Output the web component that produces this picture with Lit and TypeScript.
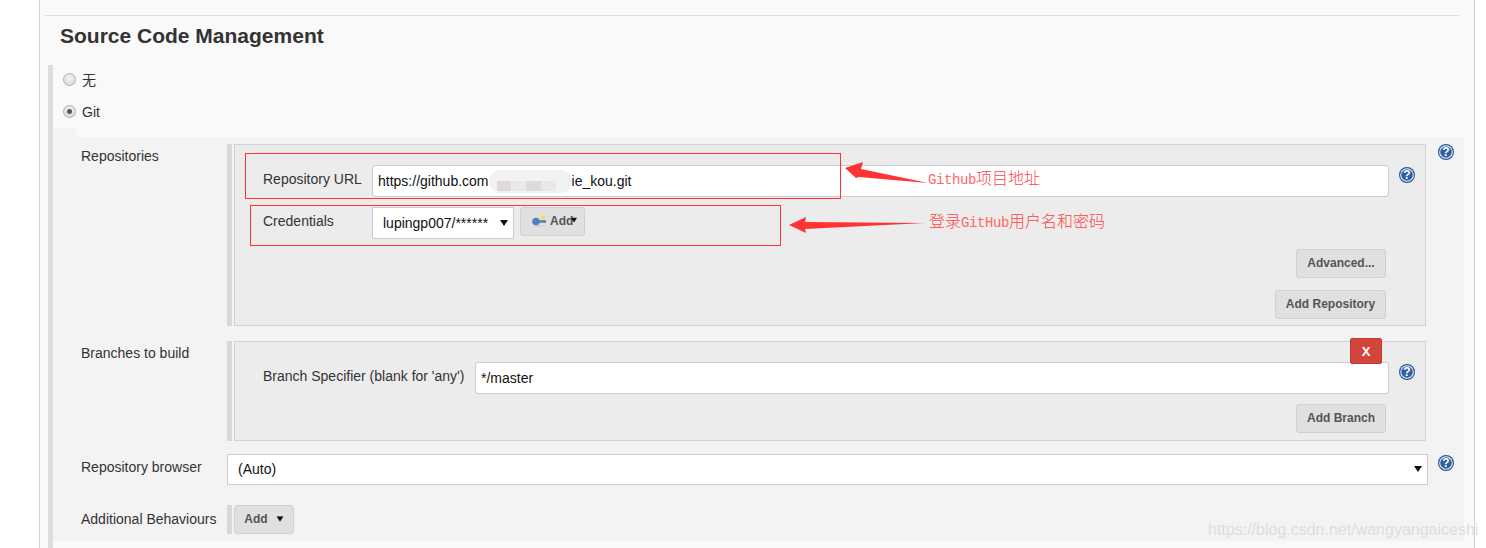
import { LitElement, html, css, svg } from "lit";
import { customElement } from "lit/decorators.js";

const help = html`<svg class="help" viewBox="0 0 16 16" width="16" height="16" aria-label="help">
  <circle cx="8" cy="8" r="8" fill="#25579b"></circle>
  <circle cx="8" cy="8" r="6.8" fill="#f4f6fa"></circle>
  <circle cx="8" cy="8" r="5.8" fill="#2f5f9f"></circle>
  <text x="8" y="12.2" text-anchor="middle" font-family="Liberation Sans, sans-serif" font-weight="700" font-size="12" fill="#fff">?</text>
</svg>`;

const tri = html`<svg class="tri" viewBox="0 0 8 6" width="8" height="6"><path d="M0 0H8L4 6Z" fill="#111"></path></svg>`;

const squares: [number, number, string][] = [
  [8, 14, "#dedada"],
  [22, 15, "#ebe9e8"],
  [37, 15, "#dcdbda"],
  [52, 15, "#e9e8e8"],
];

@customElement("app-root")
export class AppRoot extends LitElement {
  static styles = css`
    :host { display: block; position: relative; width: 1486px; height: 548px; overflow: hidden; background: #fff;
      font-family: "Liberation Sans", "Noto Sans CJK SC", sans-serif; font-size: 14px; color: #333; }
    * { box-sizing: border-box; }
    .card { margin-left: 39px; width: 1436px; height: 548px; padding-top: 15px; background: #f9f9f9;
      border-left: 1px solid #d2d2d2; border-right: 1px solid #d2d2d2; }
    .rule { margin: 0 15px 0 5px; border-top: 1px solid #dcdcdc; height: 1px; }
    h2 { margin: 7px 0 0 20px; height: 25px; line-height: 25px; font-size: 21px; font-weight: 700; color: #333; }
    .block { margin: 17px 10px 0 8px; border-left: 5px solid #ddd; height: 483px; }
    .radio-row { display: flex; align-items: center; height: 32px; padding-left: 10px; gap: 6px; }
    .radio-row .t { line-height: 16px; margin-top: -2px; }
    .radio { width: 13px; height: 13px; border-radius: 50%; border: 1px solid #b0b0b0; margin-top: -3px;
      background: radial-gradient(circle at 50% 40%, #f4f4f4, #d4d4d4); display: flex; align-items: center; justify-content: center; }
    .radio.on::after { content: ""; width: 5px; height: 5px; border-radius: 50%; background: #555; }
    .notch { width: 23px; height: 9px; margin-top: -1px; background: #f3f3f3; }
    .panel { background: #f3f3f3; width: 1411px; height: 404px; padding: 7px 0 0 28px; }
    .row { display: grid; grid-template-columns: 146px 1fr; }
    .row > label { display: block; line-height: 16px; }
    .row1 { height: 182px; }
    .row1 > label { padding-top: 4px; }
    .row2 { height: 100px; margin-top: 15px; }
    .row2 > label { padding-top: 4px; }
    .row3 { margin-top: 13px; height: 31px; }
    .row3 > label { padding-top: 5px; }
    .row4 { margin-top: 20px; height: 29px; }
    .row4 > label { padding-top: 6px; }
    .right { display: flex; align-items: flex-start; position: relative; }
    .bar { width: 5px; align-self: stretch; background: #d8d8d8; margin-right: 2px; flex: none; }
    .box { width: 1192px; height: 100%; border: 1px solid #d2d2d2; background: #ececec; padding: 20px 0 0 28px; position: relative; }
    .outer-help { margin: 0 0 0 12px; }
    .auto-help { margin: 1px 0 0 10px; }
    .help { flex: none; display: block; }
    .field { display: flex; align-items: flex-start; }
    .field label { display: block; line-height: 16px; padding-top: 6px; }
    .f-url label { width: 109px; }
    .input { height: 32px; border: 1px solid #ccc; border-radius: 3px; background: #fff; color: #111; padding-left: 5px;
      line-height: 32px; white-space: nowrap; display: flex; align-items: center; }
    .f-url .input { width: 1017px; }
    .field .help { margin: 2px 0 0 10px; }
    .blob { display: inline-block; width: 83px; height: 23px; flex: none; position: relative; border-radius: 11px; background: #f3f2f2; overflow: hidden; }
    .blob i { position: absolute; top: 11px; height: 10px; }
    .f-cred { margin-top: 10px; height: 32px; }
    .f-cred label { width: 109px; padding-top: 6px; }
    .select { height: 32px; border: 1px solid #ccc; background: #fff; color: #111; display: flex; align-items: center; justify-content: space-between; padding: 0 5px 1px 10px; }
    .select.cred { width: 142px; }
    .select.auto { width: 1201px; height: 31px; margin-left: 0; padding: 0 5px 2px 10px; }
    .select .tri { flex: none; }
    .btn { display: inline-flex; align-items: center; justify-content: center; height: 29px; padding-bottom: 1px; border: 1px solid #d0d0d0; border-radius: 3px; background: #e0e0e0;
      font-size: 12px; font-weight: 700; color: #555; white-space: nowrap; }
    .btn.add-key { width: 65px; margin-left: 6px; padding-left: 11px; justify-content: flex-start; gap: 4px; }
    .btn.add-key .tri { margin-left: -7px; margin-top: -2px; transform: scale(0.8); }
    .actions { display: flex; flex-direction: column; align-items: flex-end; margin-right: 39px; }
    .btn.adv { width: 90px; margin-top: 10px; }
    .btn.repo { width: 111px; margin-top: 12px; }
    .btn.branch { width: 90px; margin-top: 10px; }
    .branch-field label { width: 212px; }
    .branch-field .input { width: 914px; }
    .x { position: absolute; right: 43px; top: -4px; width: 32px; height: 26px; background: #d1453a; border: 1px solid #c13b30; border-radius: 2px;
      color: #fff; font-weight: 700; font-size: 13px; display: flex; align-items: center; justify-content: center; z-index: 1; }
    .btn.add-menu { width: 60px; gap: 8px; color: #555; }
    .btn.add-menu .tri { transform: scale(0.9); }
    .anno { position: absolute; border: 1px solid #f33; pointer-events: none; }
    .a1 { left: 245px; top: 153px; width: 596px; height: 46px; }
    .a2 { left: 250px; top: 205px; width: 531px; height: 41px; }
    .arrows { position: absolute; left: 0; top: 0; pointer-events: none; }
    .note { position: absolute; color: #f44; font-size: 16px; line-height: 18px; white-space: nowrap; font-family: "Noto Sans CJK SC", sans-serif; font-weight: 300; }
    .note b { font-family: "Liberation Mono", monospace; font-weight: 400; font-size: 14px; letter-spacing: -0.4px; color: #f66; }
    .n1 { left: 928px; top: 168px; }
    .n2 { left: 929px; top: 211px; }
    .mark { position: absolute; left: 1208px; top: 520px; font-size: 16px; line-height: 20px; color: rgba(205,205,205,0.6); white-space: nowrap; }
    .key { flex: none; display: block; }
  `;

  render() {
    return html`
      <div class="card">
        <div class="rule"></div>
        <h2>Source Code Management</h2>
        <div class="block">
          <div class="radio-row"><span class="radio"></span><span class="t">无</span></div>
          <div class="radio-row"><span class="radio on"></span><span class="t">Git</span></div>
          <div class="notch"></div>
          <div class="panel">
            <div class="row row1">
              <label>Repositories</label>
              <div class="right">
                <div class="bar"></div>
                <div class="box">
                  <div class="field f-url">
                    <label>Repository URL</label>
                    <div class="input">https://github.com<span class="blob">${squares.map(
                      ([l, w, c]) => html`<i style="left:${l}px;width:${w}px;background:${c}"></i>`
                    )}</span>ie_kou.git</div>
                    ${help}
                  </div>
                  <div class="field f-cred">
                    <label>Credentials</label>
                    <div class="select cred"><span>lupingp007/******</span>${tri}</div>
                    <div class="btn add-key">
                      <svg class="key" viewBox="0 0 14 12" width="14" height="12">
                        <ellipse cx="7" cy="11" rx="6" ry="0.8" fill="#cfcfcf"></ellipse>
                        <circle cx="11" cy="2.4" r="2.2" fill="#f2df4a"></circle>
                        <circle cx="4" cy="6.5" r="3.8" fill="#4f81bd"></circle>
                        <path d="M5 5.2H14V7.8H5Z" fill="#4f81bd"></path>
                      </svg>
                      <span>Add</span>${tri}
                    </div>
                  </div>
                  <div class="actions">
                    <div class="btn adv">Advanced...</div>
                    <div class="btn repo">Add Repository</div>
                  </div>
                </div>
                <div class="outer-help">${help}</div>
              </div>
            </div>
            <div class="row row2">
              <label>Branches to build</label>
              <div class="right">
                <div class="bar"></div>
                <div class="box">
                  <div class="x">X</div>
                  <div class="field branch-field">
                    <label>Branch Specifier (blank for 'any')</label>
                    <div class="input">*/master</div>
                    ${help}
                  </div>
                  <div class="actions">
                    <div class="btn branch">Add Branch</div>
                  </div>
                </div>
              </div>
            </div>
            <div class="row row3">
              <label>Repository browser</label>
              <div class="right">
                <div class="select auto"><span>(Auto)</span>${tri}</div>
                <div class="auto-help">${help}</div>
              </div>
            </div>
            <div class="row row4">
              <label>Additional Behaviours</label>
              <div class="right">
                <div class="bar"></div>
                <div class="btn add-menu"><span>Add</span>${tri}</div>
              </div>
            </div>
          </div>
        </div>
      </div>
      <div class="anno a1"></div>
      <div class="anno a2"></div>
      <svg class="arrows" width="1486" height="548">
        ${svg`<path d="M845 168L863 162L861 169L928 183L859 177L856 178Z" fill="#f33"></path>
        <path d="M789 225L806 217L805 222L925 223L805 229L806 233Z" fill="#f33"></path>`}
      </svg>
      <div class="note n1"><b>Github</b>项目地址</div>
      <div class="note n2">登录<b>GitHub</b>用户名和密码</div>
      <div class="mark">https://blog.csdn.net/wangyangaiceshi</div>
    `;
  }
}
